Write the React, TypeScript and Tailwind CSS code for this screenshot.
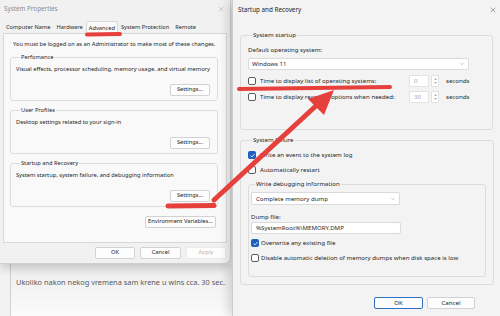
import { ChevronDown, X } from "lucide-react";
import type { ReactNode } from "react";

type BtnProps = {
  children: ReactNode;
  className?: string;
  primary?: boolean;
  disabled?: boolean;
};

function Btn({ children, className = "", primary = false, disabled = false }: BtnProps) {
  const tone = primary
    ? "border-[#2f6fc6] text-[#1b1b1b]"
    : disabled
      ? "border-[#ececec] text-[#b9b9b9]"
      : "border-[#d2d2d2] text-[#1b1b1b]";
  return (
    <div
      className={`flex h-[12px] items-center justify-center whitespace-nowrap rounded-[2px] border bg-[#fdfdfd] leading-none ${tone} ${className}`}
    >
      {children}
    </div>
  );
}

function Group({
  label,
  className = "",
  children,
}: {
  label: string;
  className?: string;
  children: ReactNode;
}) {
  return (
    <fieldset className={`rounded-[3px] border border-[#dcdcdc] ${className}`}>
      <legend className="ml-[4px] px-[1px] leading-[8px]">{label}</legend>
      {children}
    </fieldset>
  );
}

function Check({ checked = false }: { checked?: boolean }) {
  if (checked) {
    return (
      <span className="flex h-[8px] w-[8px] shrink-0 items-center justify-center rounded-[2px] bg-[#1d5fbd]">
        <svg viewBox="0 0 8 8" className="h-[7px] w-[7px]">
          <path d="M1.8 4.2 3.3 5.6 6.3 2.4" stroke="white" strokeWidth="1" fill="none" />
        </svg>
      </span>
    );
  }
  return <span className="h-[8px] w-[8px] shrink-0 rounded-[2px] border border-[#5c5c5c] bg-white" />;
}

function Spinner() {
  return (
    <div className="ml-[2px] flex h-[12px] w-[8px] flex-col items-center justify-center gap-[2px] rounded-[1px] border border-[#e2e2e2] bg-white">
      <svg viewBox="0 0 4 2" className="h-[2px] w-[3px]">
        <path d="M0 2 2 0 4 2Z" fill="#9a9a9a" />
      </svg>
      <svg viewBox="0 0 4 2" className="h-[2px] w-[3px]">
        <path d="M0 0 2 2 4 0Z" fill="#9a9a9a" />
      </svg>
    </div>
  );
}

function TimeRow({ label, value }: { label: string; value: string }) {
  return (
    <div className="flex h-[12px] items-center">
      <Check />
      <span className="ml-[4px] w-[149px]">{label}</span>
      <div className="flex h-[12px] w-[20px] items-center rounded-[1px] border border-[#e2e2e2] bg-white pl-[4px] text-[#a8a8a8]">
        {value}
      </div>
      <Spinner />
      <span className="ml-[7px]">seconds</span>
    </div>
  );
}

function SystemProperties() {
  const tabs = ["Computer Name", "Hardware", "Advanced", "System Protection", "Remote"];
  return (
    <div className="absolute left-0 top-0 flex h-[264px] w-[231px] flex-col whitespace-nowrap rounded-br-[6px] border-b border-r border-[#cfcfcf] bg-[#f1f1f1] text-[5.7px] text-[#1f1f1f] shadow-[0_4px_10px_rgba(0,0,0,0.18)]">
      <div className="flex h-[17px] items-center justify-between pl-[4px] pr-[5px] text-[6.3px] text-[#8c8c8c]">
        <span>System Properties</span>
        <X className="h-[8px] w-[8px] text-[#9a9a9a]" strokeWidth={1.2} />
      </div>
      <div className="flex h-[16px] items-end pl-[3px]">
        {tabs.map((t) =>
          t === "Advanced" ? (
            <div
              key={t}
              className="-mb-px flex h-[13px] items-center rounded-t-[2px] border border-b-0 border-[#d8d8d8] bg-[#f9f9f9] px-[2px]"
            >
              {t}
            </div>
          ) : (
            <div key={t} className="flex h-[11px] items-center px-[3px] text-[#2a2a2a]">
              {t}
            </div>
          ),
        )}
      </div>
      <div className="mx-[3px] flex h-[210px] flex-col border border-[#d8d8d8] bg-[#f9f9f9]">
        <div className="mt-[6px] pl-[9px] leading-[8px]">
          You must be logged on as an Administrator to make most of these changes.
        </div>
        <Group label="Perfomance" className="ml-[6px] mr-[8px] mt-[5px] px-[5px] pb-[4px]">
          <div className="mt-[4px] leading-[8px]">
            Visual effects, processor scheduling, memory usage, and virtual memory
          </div>
          <div className="mt-[11px] flex justify-end pr-[2px]">
            <Btn className="w-[40px]">Settings...</Btn>
          </div>
        </Group>
        <Group label="User Profiles" className="ml-[6px] mr-[8px] mt-[5px] px-[5px] pb-[4px]">
          <div className="mt-[4px] leading-[8px]">Desktop settings related to your sign-in</div>
          <div className="mt-[11px] flex justify-end pr-[2px]">
            <Btn className="w-[40px]">Settings...</Btn>
          </div>
        </Group>
        <Group label="Startup and Recovery" className="ml-[6px] mr-[8px] mt-[5px] px-[5px] pb-[4px]">
          <div className="mt-[4px] leading-[8px]">
            System startup, system failure, and debugging information
          </div>
          <div className="mt-[11px] flex justify-end pr-[2px]">
            <Btn className="w-[40px]">Settings...</Btn>
          </div>
        </Group>
        <div className="mt-[9px] flex justify-end pr-[10px]">
          <Btn className="w-[71px]">Environment Variables...</Btn>
        </div>
      </div>
      <div className="flex flex-1 items-center justify-end gap-[5px] pr-[4px]">
        <Btn className="w-[40px]">OK</Btn>
        <Btn className="w-[41px]">Cancel</Btn>
        <Btn className="w-[40px]" disabled>
          Apply
        </Btn>
      </div>
    </div>
  );
}

function StartupRecovery() {
  return (
    <div className="absolute left-[232px] top-0 flex h-[316px] w-[270px] flex-col whitespace-nowrap border-l border-[#cdcdcd] bg-[#f3f3f3] text-[6.1px] text-[#1f1f1f] shadow-[-4px_0_10px_rgba(0,0,0,0.15)]">
      <div className="flex h-[19px] shrink-0 items-center justify-between pl-[5px] pr-[5px] text-[6.3px]">
        <span>Startup and Recovery</span>
        <X className="h-[8px] w-[8px] text-[#333]" strokeWidth={1.2} />
      </div>
      <Group label="System startup" className="ml-[7px] mt-[12px] h-[99px] w-[253px] px-[7px]">
        <div className="mt-[7px] leading-[8px]">Default operating system:</div>
        <div className="mt-[4px] flex h-[12px] w-[221px] items-center justify-between rounded-[2px] border border-[#dadada] bg-white pl-[3px] pr-[3px]">
          <span>Windows 11</span>
          <ChevronDown className="h-[6px] w-[6px] text-[#777]" strokeWidth={1.5} />
        </div>
        <div className="mt-[5px] flex flex-col gap-[4px]">
          <TimeRow label="Time to display list of operating systems:" value="0" />
          <TimeRow label="Time to display recovery options when needed:" value="30" />
        </div>
      </Group>
      <Group label="System failure" className="ml-[7px] mt-[6px] h-[149px] w-[253px] px-[7px]">
        <div className="mt-[6px] flex h-[10px] items-center gap-[4px]">
          <Check checked />
          <span>Write an event to the system log</span>
        </div>
        <div className="mt-[5px] flex h-[10px] items-center gap-[4px]">
          <Check />
          <span>Automatically restart</span>
        </div>
        <Group label="Write debugging information" className="mt-[5px] h-[97px] w-[238px] px-[2px]">
          <div className="mt-[4px] flex h-[13px] w-[149px] items-center justify-between rounded-[2px] border border-[#dadada] bg-white pl-[4px] pr-[3px]">
            <span>Complete memory dump</span>
            <ChevronDown className="h-[6px] w-[6px] text-[#777]" strokeWidth={1.5} />
          </div>
          <div className="mt-[8px] leading-[8px]">Dump file:</div>
          <div className="mt-[1px] flex h-[12px] w-[150px] items-center rounded-[2px] border border-[#dadada] bg-white pl-[4px]">
            %SystemRoot%\MEMORY.DMP
          </div>
          <div className="mt-[4px] flex h-[10px] items-center gap-[2px]">
            <Check checked />
            <span>Overwrite any existing file</span>
          </div>
          <div className="mt-[5px] flex h-[10px] items-center gap-[2px]">
            <Check />
            <span>Disable automatic deletion of memory dumps when disk space is low</span>
          </div>
        </Group>
      </Group>
      <div className="mt-[12px] flex gap-[4px] pl-[141px]">
        <Btn className="w-[49px]" primary>
          OK
        </Btn>
        <Btn className="w-[48px]">Cancel</Btn>
      </div>
    </div>
  );
}

export default function App() {
  return (
    <div className="relative h-[316px] w-[500px] overflow-hidden bg-[#f2f2f2] font-['Noto_Sans',sans-serif]">
      <div className="flex h-full flex-col justify-end">
        <div className="ml-[10px] h-[52px] border-l border-[#cfcfcf] bg-linear-to-b from-[#ededed] to-[#fbfbfb] pl-[5px] pt-[13px] text-[7.4px] text-[#5a5a5a]">
          Ukoliko nakon nekog vremena sam krene u wins cca. 30 sec.
        </div>
      </div>
      <SystemProperties />
      <StartupRecovery />
      <svg className="pointer-events-none absolute left-0 top-0" width="500" height="316" viewBox="0 0 500 316">
        <g stroke="#e5403c" strokeLinecap="round" fill="none">
          <path d="M87 34.5 L120 34" strokeWidth="4" />
          <path d="M168 206 L214 205.5" strokeWidth="5" />
          <path d="M239 89 L390 87" strokeWidth="4" />
          <path d="M214 200 L318 104" strokeWidth="5" />
        </g>
        <polygon points="334,90 324,115 308,99" fill="#e5403c" />
      </svg>
    </div>
  );
}
